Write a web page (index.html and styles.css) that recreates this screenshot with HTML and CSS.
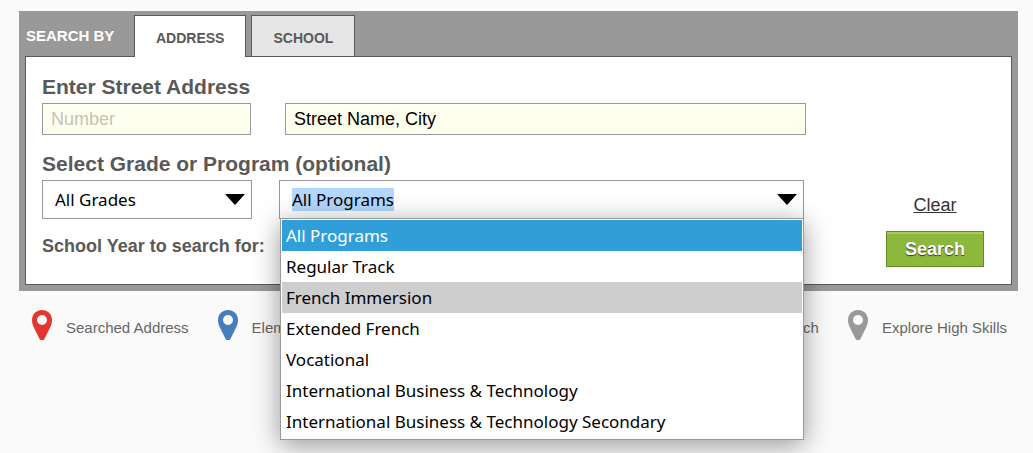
FILE: index.html
```html
<!DOCTYPE html>
<html lang="en">
<head>
    <meta charset="UTF-8">
    <meta name="viewport" content="width=device-width, initial-scale=1.0">
    <title>School Search</title>
    <link rel="stylesheet" href="styles.css">
</head>
<body>

    <div class="search-panel">
        <div class="tabs" role="tablist">
            <span class="tabs-title">SEARCH BY</span>
            <button type="button" class="tab active" role="tab" aria-selected="true">ADDRESS</button>
            <button type="button" class="tab" role="tab" aria-selected="false">SCHOOL</button>
        </div>

        <form class="search-form">
            <div class="fields">
                <label class="heading" for="number">Enter Street Address</label>
                <div class="address-row">
                    <input type="text" id="number" class="text-input number" placeholder="Number">
                    <input type="text" class="text-input street" value="Street Name, City" aria-label="Street Name, City">
                </div>

                <label class="heading" for="grade">Select Grade or Program (optional)</label>
                <div class="program-row">
                    <div class="select-box grade">
                        <select id="grade">
                            <option>All Grades</option>
                        </select>
                        <svg class="arrow" viewBox="0 0 20 11"><path d="M0 0h20L10 11z"/></svg>
                    </div>
                    <div class="select-box program">
                        <input type="text" id="program" value="All Programs" role="combobox" aria-label="Program" aria-expanded="true" aria-controls="program-list" autocomplete="off">
                        <svg class="arrow" viewBox="0 0 20 11"><path d="M0 0h20L10 11z"/></svg>
                        <ul class="menu" id="program-list" role="listbox">
                            <li role="option" class="selected" aria-selected="true">All Programs</li>
                            <li role="option">Regular Track</li>
                            <li role="option" class="hover">French Immersion</li>
                            <li role="option">Extended French</li>
                            <li role="option">Vocational</li>
                            <li role="option">International Business &amp; Technology</li>
                            <li role="option">International Business &amp; Technology Secondary</li>
                        </ul>
                    </div>
                </div>

                <p class="year">School Year to search for:</p>
            </div>

            <div class="actions">
                <a href="#" class="clear">Clear</a>
                <button type="submit" class="search-button">Search</button>
            </div>
        </form>
    </div>

    <div class="legend">
        <div class="legend-item">
            <svg class="pin red" viewBox="0 0 20 30"><path fill-rule="evenodd" d="M10 0C4.300 0 0 4.300 0 10c0 3.500 1.200 6 2.500 8.700L7.600 29c.3.700.8 1 1.400 1h2c.6 0 1.100-.3 1.400-1l5.100-10.300C18.800 16 20 13.500 20 10 20 4.300 15.700 0 10 0zm0 5a5 5 0 1 1 0 10 5 5 0 0 1 0-10z"/></svg>
            <span>Searched Address</span>
        </div>
        <div class="legend-item">
            <svg class="pin blue" viewBox="0 0 20 30"><path fill-rule="evenodd" d="M10 0C4.300 0 0 4.300 0 10c0 3.500 1.200 6 2.500 8.700L7.600 29c.3.700.8 1 1.400 1h2c.6 0 1.100-.3 1.400-1l5.100-10.300C18.800 16 20 13.500 20 10 20 4.300 15.700 0 10 0zm0 5a5 5 0 1 1 0 10 5 5 0 0 1 0-10z"/></svg>
            <span>Elementary</span>
        </div>
        <div class="legend-item last-group">
            <span>French</span>
        </div>
        <div class="legend-item">
            <svg class="pin gray" viewBox="0 0 20 30"><path fill-rule="evenodd" d="M10 0C4.300 0 0 4.300 0 10c0 3.500 1.200 6 2.500 8.700L7.600 29c.3.700.8 1 1.400 1h2c.6 0 1.100-.3 1.400-1l5.100-10.300C18.800 16 20 13.500 20 10 20 4.300 15.700 0 10 0zm0 5a5 5 0 1 1 0 10 5 5 0 0 1 0-10z"/></svg>
            <span>Explore High Skills</span>
        </div>
    </div>

    <script>
        const program = document.getElementById('program');
        program.focus();
        program.select();
    </script>
</body>
</html>
```

FILE: styles.css
```css
* {
    box-sizing: border-box;
}

body {
    font-family: "Liberation Sans", Arial, sans-serif;
    margin: 0;
    padding: 11px 15px 0 19px;
    min-height: 100vh;
    background-color: #fafafa;
    color: #595959;
}

.search-panel {
    background-color: #999;
    padding: 4px 6px 6px;
}

/* Tabs */
.tabs {
    display: flex;
    align-items: flex-start;
    gap: 5px;
}

.tabs-title {
    width: 104px;
    padding-left: 1px;
    line-height: 42px;
    font-size: 15px;
    font-weight: bold;
    color: #fff;
}

.tab {
    height: 41px;
    padding: 3px 21px 0;
    border: 1px solid #595959;
    border-bottom: none;
    background-color: #e6e6e6;
    color: #595959;
    font-family: inherit;
    font-size: 14px;
    font-weight: bold;
    cursor: pointer;
}

.tab.active {
    height: 42px;
    position: relative;
    z-index: 1;
    background-color: #fff;
}

/* Form */
.search-form {
    display: flex;
    gap: 80px;
    margin-top: -1px;
    padding: 18px 27px 17px 16px;
    border: 1px solid #595959;
    background-color: #fff;
}

.fields {
    flex: 1;
}

.heading {
    display: block;
    line-height: 24px;
    font-size: 21px;
    font-weight: bold;
}

.address-row {
    display: flex;
    gap: 34px;
    margin: 4px 0 17px;
}

.text-input {
    height: 32px;
    padding: 0 8px;
    border: 1px solid #999;
    background-color: #fffff0;
    color: #000;
    font-family: inherit;
    font-size: 18px;
}

.text-input::placeholder {
    color: #c3c3b8;
}

.number {
    width: 209px;
}

.street {
    flex: 1;
}

.program-row {
    display: flex;
    gap: 27px;
    margin: 4px 2px 15px 0;
}

.select-box {
    position: relative;
    height: 39px;
    border: 1px solid #999;
}

.grade {
    width: 210px;
}

.program {
    flex: 1;
}

.select-box select,
.select-box input {
    display: block;
    width: 100%;
    height: 37px;
    padding: 0 12px;
    border: none;
    outline: none;
    appearance: none;
    background-color: #fff;
    color: #000;
    font-family: "Noto Sans", sans-serif;
    font-size: 17px;
}

.select-box input::selection {
    background-color: #b3d7ff;
    color: #000;
}

.arrow {
    position: absolute;
    top: 13px;
    right: 6px;
    width: 20px;
    height: 11px;
    pointer-events: none;
}

.menu {
    position: absolute;
    top: 37px;
    left: 0;
    right: -1px;
    z-index: 10;
    margin: 0;
    padding: 1px 1px 2px;
    border: 1px solid #999;
    background-color: #fff;
    box-shadow: 0 5px 25px rgba(0, 0, 0, 0.4);
    color: #000;
    font-family: "Noto Sans", sans-serif;
    font-size: 17px;
    list-style: none;
}

.menu li {
    padding: 0 4px;
    line-height: 31px;
    cursor: pointer;
}

.menu .selected {
    background-color: #309fd9;
    color: #fff;
}

.menu .hover {
    background-color: #cecece;
}

.year {
    margin: 0 0 9px;
    line-height: 24px;
    font-size: 18px;
    font-weight: bold;
}

.actions {
    display: flex;
    flex-direction: column;
    justify-content: flex-end;
    align-items: center;
    gap: 16px;
}

.clear {
    line-height: 20px;
    font-size: 18px;
    color: #333;
}

.search-button {
    width: 98px;
    height: 36px;
    border: 1px solid #648a24;
    background-color: #8cb83c;
    box-shadow: inset 0 2px 0 #a3cc5c;
    color: #fff;
    font-family: inherit;
    font-size: 18px;
    font-weight: bold;
    text-shadow: 0 1px 1px #333;
    cursor: pointer;
}

/* Legend */
.legend {
    display: flex;
    gap: 29px;
    padding: 19px 11px 0 13px;
    font-size: 15px;
    color: #666;
}

.legend-item {
    display: flex;
    align-items: center;
    gap: 14px;
}

.legend-item span {
    padding-top: 5px;
}

.last-group {
    margin-left: auto;
}

.pin {
    width: 20px;
    height: 30px;
}

.red {
    fill: #e5352f;
}

.blue {
    fill: #467ebd;
}

.gray {
    fill: #999;
}
```
